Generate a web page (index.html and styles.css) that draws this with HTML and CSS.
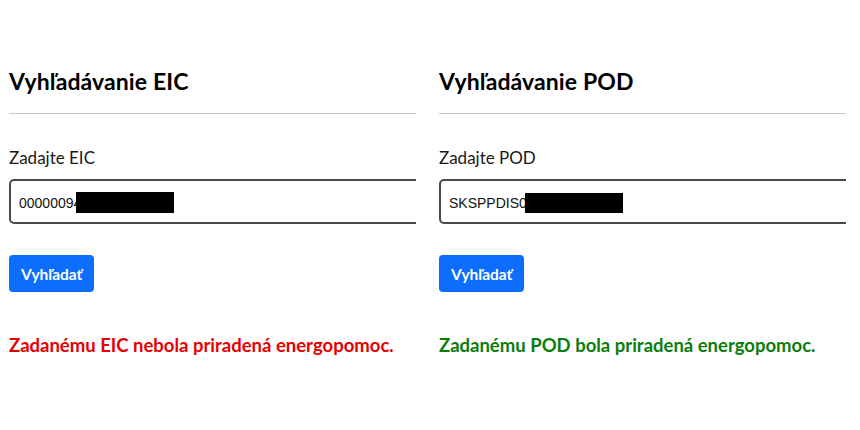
FILE: index.html
```html
<!DOCTYPE html>
<html lang="sk">
<head>
<meta charset="utf-8">
<title>Vyhľadávanie</title>
<link rel="stylesheet" href="styles.css">
</head>
<body>
<div class="page">
  <section class="col">
    <h2 class="title">Vyhľadávanie EIC</h2>
    <hr class="rule">
    <label class="label" for="eic">Zadajte EIC</label>
    <div class="field">
      <div class="input" id="eic">00000094</div>
      <span class="redact redact-eic"></span>
    </div>
    <button class="btn">Vyhľadať</button>
    <p class="msg msg-bad">Zadanému EIC nebola priradená energopomoc.</p>
  </section>
  <section class="col">
    <h2 class="title">Vyhľadávanie POD</h2>
    <hr class="rule">
    <label class="label" for="pod">Zadajte POD</label>
    <div class="field">
      <div class="input" id="pod">SKSPPDIS00</div>
      <span class="redact redact-pod"></span>
    </div>
    <button class="btn">Vyhľadať</button>
    <p class="msg msg-ok">Zadanému POD bola priradená energopomoc.</p>
  </section>
</div>
</body>
</html>
```

FILE: styles.css
```css
* { box-sizing: border-box; }
html, body { margin: 0; padding: 0; background: #fff; }
body { font-family: Lato, "Noto Sans", sans-serif; color: #111; }
.page {
  display: grid;
  grid-template-columns: 416px 416px;
  column-gap: 14px;
  width: 860px;
}
.col {
  padding: 68px 0 0 9px;
  overflow: hidden;
  display: flex;
  flex-direction: column;
  align-items: flex-start;
}
.title {
  margin: 0;
  font-size: 23px;
  line-height: 26px;
  font-weight: 700;
  color: #000;
  letter-spacing: 0.1px;
}
.rule {
  align-self: stretch;
  margin: 19px 0 0 0;
  border: 0;
  border-top: 1px solid #c8c8c8;
  height: 0;
}
.label {
  margin-top: 32px;
  font-size: 17px;
  line-height: 24px;
  color: #1a1a1a;
}
.field {
  position: relative;
  margin-top: 9px;
  width: 440px;
}
.input {
  height: 45px;
  border: 2px solid #4a4a4a;
  border-radius: 5px;
  padding: 14px 0 0 8px;
  font-family: "Liberation Sans", Arial, sans-serif;
  font-size: 14px;
  line-height: 16px;
  color: #111;
  background: #fff;
}
.redact {
  position: absolute;
  top: 13px;
  height: 21px;
  width: 98px;
  background: #000;
}
.redact-eic { left: 67px; }
.redact-pod { left: 86px; top: 14px; height: 20px; }
.btn {
  margin-top: 31px;
  height: 37px;
  padding: 0 12px;
  border: 0;
  border-radius: 4px;
  background: #0d6efd;
  color: #fff;
  font-family: Lato, "Noto Sans", sans-serif;
  font-weight: 700;
  font-size: 15.5px;
}
.msg {
  margin: 41px 0 0 0;
  font-size: 18.5px;
  line-height: 24px;
  font-weight: 700;
}
.msg-bad { color: #e60000; }
.msg-ok { color: #0b7d0b; }
```
